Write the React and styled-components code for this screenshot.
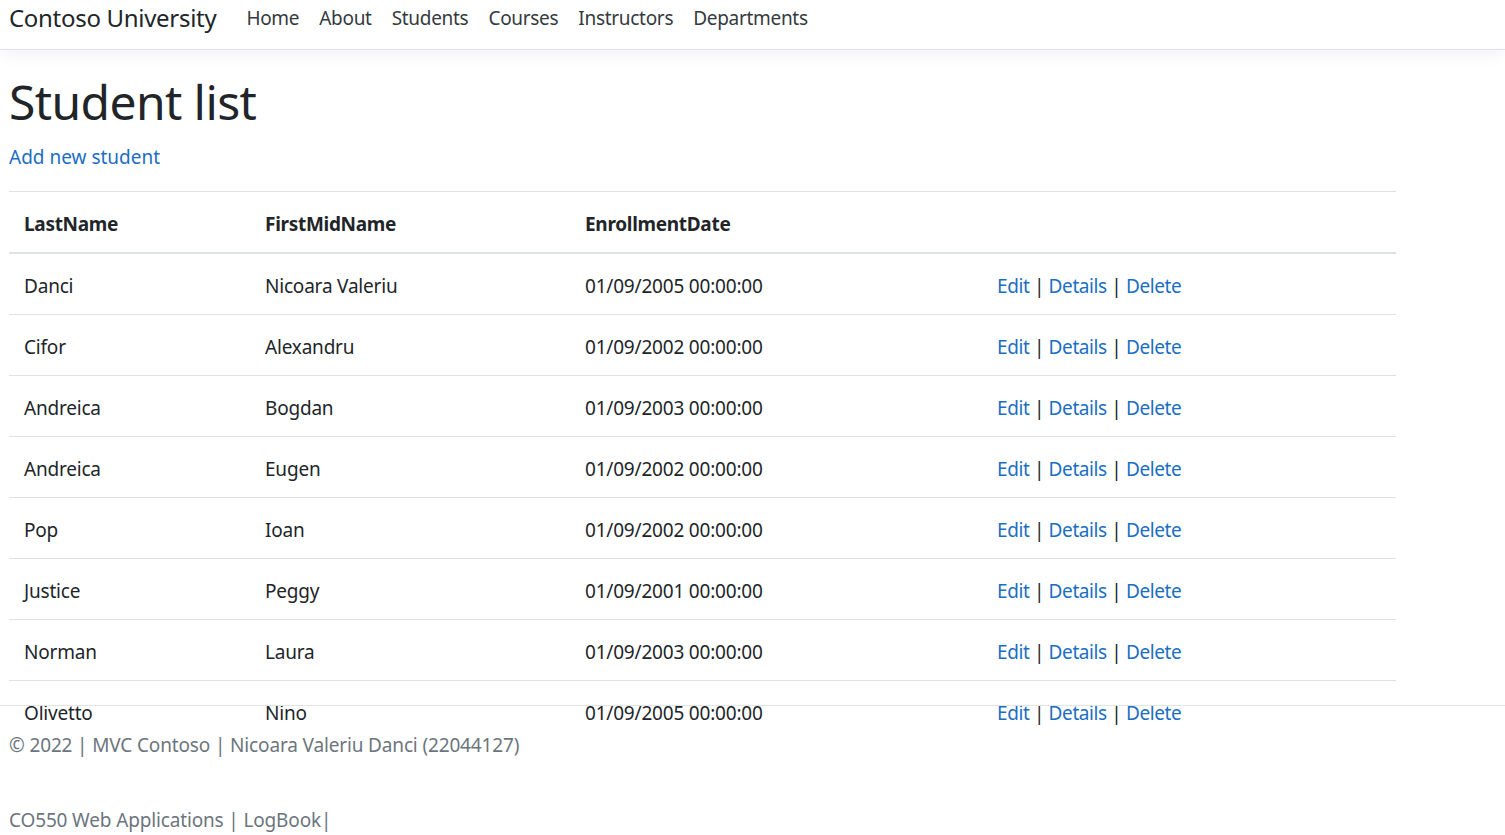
import React from "react";
import styled, { createGlobalStyle } from "styled-components";

const students = [
  ["Danci", "Nicoara Valeriu", "01/09/2005 00:00:00"],
  ["Cifor", "Alexandru", "01/09/2002 00:00:00"],
  ["Andreica", "Bogdan", "01/09/2003 00:00:00"],
  ["Andreica", "Eugen", "01/09/2002 00:00:00"],
  ["Pop", "Ioan", "01/09/2002 00:00:00"],
  ["Justice", "Peggy", "01/09/2001 00:00:00"],
  ["Norman", "Laura", "01/09/2003 00:00:00"],
  ["Olivetto", "Nino", "01/09/2005 00:00:00"],
];

const navLinks = ["Home", "About", "Students", "Courses", "Instructors", "Departments"];

const GlobalStyle = createGlobalStyle`
  html, body {
    margin: 0;
    padding: 0;
    background: #fff;
  }
  body {
    font-family: "Noto Sans", "Open Sans", sans-serif;
    font-size: 20px;
    line-height: 1.5;
    color: #212529;
  }
  #root {
    position: relative;
    height: 835px;
    overflow: hidden;
  }
`;

const Navbar = styled.header`
  display: flex;
  align-items: flex-start;
  height: 50px;
  padding: 0 9px;
  box-sizing: border-box;
  border-bottom: 1px solid #dee2e6;
  box-shadow: 0 5px 15px rgba(0, 0, 0, 0.05);
  margin-bottom: 22px;
`;

const Brand = styled.a`
  font-size: 24px;
  line-height: 36px;
  color: #212529;
  text-decoration: none;
  margin-right: 20px;
  letter-spacing: -0.3px;
`;

const NavList = styled.nav`
  display: flex;
`;

const NavLink = styled.a`
  font-size: 19px;
  line-height: 36px;
  padding: 0 10px;
  color: #343a40;
  text-decoration: none;
  letter-spacing: -0.3px;
`;

const Main = styled.main`
  padding: 0 9px;
  width: 1387px;
`;

const Title = styled.h1`
  font-size: 48px;
  font-weight: 400;
  line-height: 60px;
  margin: 0 0 10px;
  letter-spacing: -0.6px;
`;

const Link = styled.a`
  color: #1b6ec2;
  text-decoration: none;
`;

const AddLink = styled.p`
  margin: 0 0 19px;
  font-size: 19px;
  line-height: 30px;
`;

const Table = styled.table`
  width: 1387px;
  border-collapse: collapse;
  table-layout: fixed;
  font-size: 19px;
`;

const Th = styled.th`
  text-align: left;
  font-weight: 700;
  padding: 17px 15px 13px;
  line-height: 30px;
  border-top: 1px solid #dee2e6;
  border-bottom: 2px solid #dee2e6;
  letter-spacing: -0.3px;
`;

const Td = styled.td`
  padding: 17px 15px 13px;
  line-height: 30px;
  border-top: 1px solid #dee2e6;
  white-space: nowrap;
  letter-spacing: -0.2px;
`;

const Actions = styled(Td)`
  letter-spacing: -0.4px;
`;

const Sep = styled.span`
  color: #212529;
`;

const Footer = styled.footer`
  position: absolute;
  top: 705px;
  left: 0;
  right: 0;
  border-top: 1px solid #e5e5e5;
  padding: 2px 9px 0;
  line-height: 75px;
  font-size: 19px;
  color: #6c757d;
  white-space: nowrap;
  letter-spacing: -0.15px;
`;

export default function App() {
  return (
    <>
      <GlobalStyle />
      <Navbar>
        <Brand href="#">Contoso University</Brand>
        <NavList>
          {navLinks.map((l) => (
            <NavLink key={l} href="#">
              {l}
            </NavLink>
          ))}
        </NavList>
      </Navbar>
      <Main>
        <Title>Student list</Title>
        <AddLink>
          <Link href="#">Add new student</Link>
        </AddLink>
        <Table>
          <colgroup>
            <col style={{ width: 241 }} />
            <col style={{ width: 320 }} />
            <col style={{ width: 412 }} />
            <col />
          </colgroup>
          <thead>
            <tr>
              <Th>LastName</Th>
              <Th>FirstMidName</Th>
              <Th>EnrollmentDate</Th>
              <Th></Th>
            </tr>
          </thead>
          <tbody>
            {students.map(([last, first, date], i) => (
              <tr key={i}>
                <Td>{last}</Td>
                <Td>{first}</Td>
                <Td>{date}</Td>
                <Actions>
                  <Link href="#">Edit</Link> <Sep>|</Sep> <Link href="#">Details</Link>{" "}
                  <Sep>|</Sep> <Link href="#">Delete</Link>
                </Actions>
              </tr>
            ))}
          </tbody>
        </Table>
      </Main>
      <Footer>
        <div>© 2022 | MVC Contoso | Nicoara Valeriu Danci (22044127)</div>
        <div>CO550 Web Applications | LogBook|</div>
      </Footer>
    </>
  );
}
